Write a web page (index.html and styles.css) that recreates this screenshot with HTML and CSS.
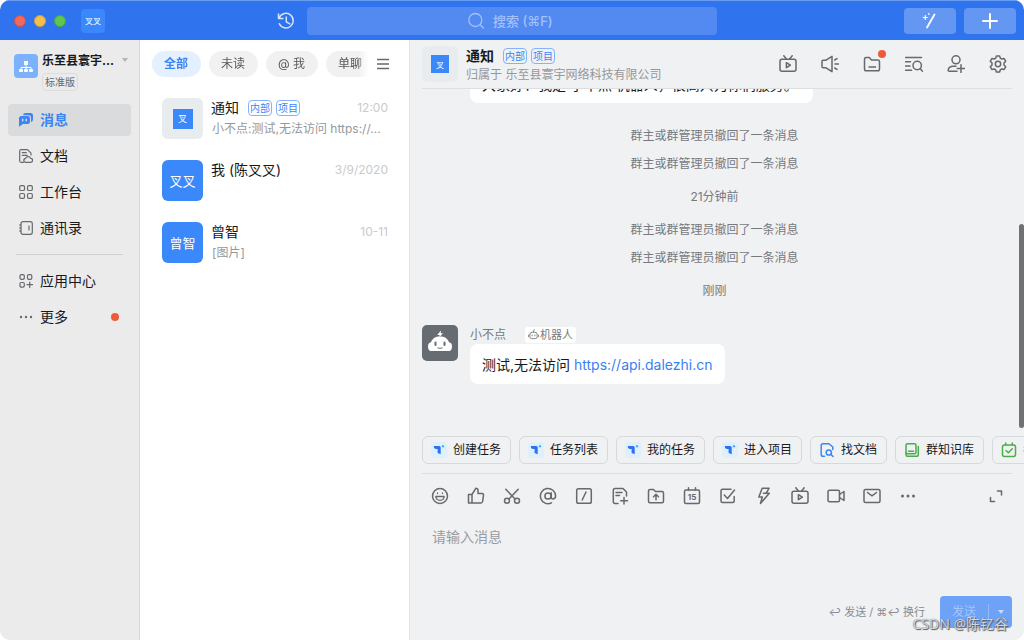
FILE: index.html
```html
<!DOCTYPE html>
<html lang="zh-CN">
<head>
<meta charset="utf-8">
<meta name="viewport" content="width=device-width, initial-scale=1">
<title>通知</title>
<link rel="stylesheet" href="styles.css">
</head>
<body>
<svg class="sprite" aria-hidden="true">
  <symbol id="tv" viewBox="0 0 18 18"><rect x="1" y="4.2" width="16" height="12" rx="2"/><path d="M4.8.8 7.6 4.2M13.2.8l-2.8 3.4M7.4 7.7v5l4-2.5z"/></symbol>
  <symbol id="teambition" viewBox="0 0 16 16"><rect width="16" height="16" rx="3" fill="#dff0fd" stroke="none"/><path d="M2.800 4H8.200Q9.700 4 9.700 5.500V12.200L6.600 11V7H5Q2.800 7 2.800 4z" fill="#2f6ff2" stroke="none"/><circle cx="12" cy="4.300" r="1.200" fill="#4bb4fa" stroke="none"/></symbol>
</svg>

<div class="window">
  <header class="topbar">
    <div class="topbar-left">
      <span class="lights"><i class="light red"></i><i class="light yellow"></i><i class="light lime"></i></span>
      <span class="me">叉叉</span>
      <button class="history" aria-label="历史">
        <svg class="icon" viewBox="0 0 18 18"><path d="M1.500 2v4.500H6M2 6.300A7.300 7.300 0 1 1 2.300 11.800M9.300 5v4.800l3.400 2"/></svg>
      </button>
    </div>
    <label class="search">
      <svg class="icon" viewBox="0 0 18 18"><circle cx="8.300" cy="8" r="6.500"/><path d="m13.300 12.800 3 3.200"/></svg>
      <input type="search" placeholder="搜索 (⌘F)" aria-label="搜索">
    </label>
    <div class="topbar-right">
      <button class="top-button" aria-label="快捷工具"><svg class="icon" viewBox="0 0 18 18"><path d="M13.500 2.500 6 15.500" stroke-width="1.800"/><path d="M4.300 3.500v4M2.300 5.500h4" stroke-width="1.200"/><path d="M7.800 1.500v1" stroke-width="1.200"/></svg></button>
      <button class="top-button" aria-label="新建"><svg class="icon" viewBox="0 0 18 18"><path d="M9 2v14M2 9h14" stroke-width="2"/></svg></button>
    </div>
  </header>

  <div class="body">
    <aside class="sidebar">
      <div class="org">
        <span class="org-logo"><svg viewBox="0 0 24 24"><rect x="10" y="7" width="4" height="4" fill="#fff"/><path d="M12 11v5M7 16v-2.500h10V16" fill="none" stroke="#fff"/><rect x="5" y="15" width="4" height="3" rx="1" fill="#fff"/><rect x="10" y="15" width="4" height="3" rx="1" fill="#fff"/><rect x="15" y="15" width="4" height="3" rx="1" fill="#fff"/></svg></span>
        <div class="org-info">
          <div class="org-name">乐至县寰宇...</div>
          <span class="edition">标准版</span>
        </div>
        <i class="caret"></i>
      </div>
      <nav class="nav">
        <a class="nav-item active" href="#messages"><svg class="icon solid" viewBox="0 0 14 14"><path d="M4 2.200Q4.300 0 6.500 0H11.500Q14 0 14 2.500V6.500Q14 8.500 12 9.300V4.500Q12 2.200 9.500 2.200z"/><path d="M2.500 3H8.500Q11 3 11 5.500V8.500Q11 11 8.500 11H4L.5 13.500Q0 13.800 0 13V5.500Q0 3 2.500 3z"/><path d="M3.700 6.200v1.600M7.200 6.200v1.600" stroke="#dadbdd" stroke-width="1.400"/></svg>消息</a>
        <a class="nav-item" href="#docs"><svg class="icon" viewBox="0 0 14 14"><path d="M4.500 13.300H2.200Q.7 13.300.7 11.800V2.200Q.7.7 2.200.7H8.500L12 4.200V6M3.300 3.700h4M3.300 6.300h5M7 13.300a2 2 0 0 1-.3-4A2.600 2.600 0 0 1 11.600 9.300a2 2 0 0 1 0 4z"/></svg>文档</a>
        <a class="nav-item" href="#work"><svg class="icon" viewBox="0 0 14 14"><rect x=".7" y=".7" width="4.800" height="4.800" rx="1.300"/><rect x="8.500" y=".7" width="4.800" height="4.800" rx="1.300"/><rect x=".7" y="8.500" width="4.800" height="4.800" rx="1.300"/><rect x="8.500" y="8.500" width="4.800" height="4.800" rx="1.300"/></svg>工作台</a>
        <a class="nav-item" href="#contacts"><svg class="icon" viewBox="0 0 14 14"><rect x="2" y=".7" width="11.300" height="12.600" rx="2"/><path d="M10 5v4M.5 4h1.500M.5 7h1.500M.5 10h1.500"/></svg>通讯录</a>
        <hr class="nav-rule">
        <a class="nav-item" href="#apps"><svg class="icon" viewBox="0 0 14 14"><rect x="1" y=".7" width="4.300" height="4.600" rx="1.300"/><rect x="8.500" y=".7" width="4.300" height="4.600" rx="1.300"/><rect x="1" y="8.500" width="4.300" height="4.600" rx="1.300"/><path d="M10.700 8v5.500M8 10.700h5.500"/></svg>应用中心</a>
        <a class="nav-item" href="#more"><svg class="icon solid" viewBox="0 0 14 14"><circle cx="2" cy="7" r="1.200"/><circle cx="7" cy="7" r="1.200"/><circle cx="12" cy="7" r="1.200"/></svg>更多<i class="dot"></i></a>
      </nav>
    </aside>

    <section class="list">
      <div class="filters">
        <div class="tabs">
          <button class="tab selected">全部</button>
          <button class="tab">未读</button>
          <button class="tab">@ 我</button>
          <button class="tab">单聊</button>
        </div>
        <button class="menu" aria-label="筛选"><svg class="icon" viewBox="0 0 12 12"><path d="M0 1.500h12M0 6h12M0 10.500h12"/></svg></button>
      </div>
      <a class="chat-row" href="#c1">
        <span class="avatar pale"><span class="mark">叉</span></span>
        <span class="row-main">
          <span class="row-top"><span class="row-name">通知</span><span class="badge">内部</span><span class="badge">项目</span><time class="time">12:00</time></span>
          <span class="preview">小不点:测试,无法访问 https://...</span>
        </span>
      </a>
      <a class="chat-row" href="#c2">
        <span class="avatar">叉叉</span>
        <span class="row-main">
          <span class="row-top"><span class="row-name">我 (陈叉叉)</span><time class="time">3/9/2020</time></span>
        </span>
      </a>
      <a class="chat-row" href="#c3">
        <span class="avatar">曾智</span>
        <span class="row-main">
          <span class="row-top"><span class="row-name">曾智</span><time class="time">10-11</time></span>
          <span class="preview">[图片]</span>
        </span>
      </a>
    </section>

    <main class="chat">
      <header class="chat-head">
        <span class="avatar pale small"><span class="mark">叉</span></span>
        <div class="chat-title">
          <div class="title-line"><h1>通知</h1><span class="badge">内部</span><span class="badge">项目</span></div>
          <div class="belongs">归属于 乐至县寰宇网络科技有限公司</div>
        </div>
        <div class="head-actions">
          <button aria-label="直播"><svg class="icon"><use href="#tv"/></svg></button>
          <button aria-label="公告"><svg class="icon" viewBox="0 0 18 18"><path d="M1 6.200Q1 5.200 2 5.200H5L11 1.300V16.700L5 12.800H2Q1 12.800 1 11.800zM13.700 5l2.300-1.400M14 9h3.500M13.700 13l2.300 1.400"/></svg></button>
          <button class="flagged" aria-label="文件"><svg class="icon" viewBox="0 0 18 18"><path d="M1.500 4.200Q1.500 2.500 3.200 2.500H6.300L8.500 5H14.800Q16.500 5 16.500 6.700V14Q16.500 15.800 14.700 15.800H3.300Q1.500 15.800 1.500 14zM6 12h6.500"/></svg><i class="dot"></i></button>
          <button aria-label="查找聊天记录"><svg class="icon" viewBox="0 0 18 18"><path d="M.5 2.500h16M.5 6.800h5M.5 11h4.500M.5 15.300h6M15.200 13.700l2.300 2.500"/><circle cx="12.200" cy="10.500" r="4.200"/></svg></button>
          <button aria-label="添加成员"><svg class="icon" viewBox="0 0 18 18"><circle cx="9" cy="4.800" r="4"/><path d="M10 16.300H2.500Q.8 16.300 1.300 14.500 2.300 11.300 6 11.300H9M14 9.800v7.700M10.200 13.600h7.600"/></svg></button>
          <button aria-label="设置"><svg class="icon" viewBox="0 0 18 18"><path d="M7.400.9h3.200l.7 2.300 1.400.8 2.300-.6 1.700 2.800-1.700 1.900v1.800l1.700 1.900-1.700 2.800-2.300-.6-1.400.8-.7 2.300H7.400l-.7-2.300-1.400-.8-2.300.6-1.700-2.800L3 9.900V8.100L1.300 6.200 3 3.400l2.300.6 1.400-.8z"/><circle cx="9" cy="9" r="2.700"/></svg></button>
        </div>
      </header>

      <div class="messages">
        <div class="bubble greeting">大家好！我是 小不点 机器人，很高兴为你们服务。</div>
        <div class="log">
          <p>群主或群管理员撤回了一条消息</p>
          <p>群主或群管理员撤回了一条消息</p>
          <p class="stamp">21分钟前</p>
          <p>群主或群管理员撤回了一条消息</p>
          <p>群主或群管理员撤回了一条消息</p>
          <p class="stamp">刚刚</p>
        </div>
        <article class="message">
          <span class="bot"><svg viewBox="0 0 36 36"><path d="M19 5.500 15.200 10H17.500V12L21 8.300H18.700z" fill="#fff"/><path d="M8.500 26Q6 25.500 6 21.300 6 18 9 17.300 C10.500 13.200 13.500 11.500 18 11.500 S25.500 13.200 27 17.300Q30 18 30 21.300 30 25.500 27.500 26z" fill="#fff"/><path d="M13.500 17.500v2.500M22.500 17.500v2.500" stroke="#666c72" stroke-width="2" stroke-linecap="round"/><path d="M15.500 22.800q2.500 1.200 5 0" fill="none" stroke="#666c72"/></svg></span>
          <div>
            <div class="sender">小不点<span class="robot-tag"><svg class="icon" viewBox="0 0 12 12"><path d="M2 6Q2 3.500 4.500 3.500H7.500Q10 3.500 10 6V8.500Q10 10.500 8 10.500H4Q2 10.500 2 8.500zM.7 6.500v2M11.300 6.500v2M4.500 6.500v1M7.500 6.500v1M6.800.8 5.800 3.200"/></svg>机器人</span></div>
            <div class="bubble last">测试,无法访问 <a href="https://api.dalezhi.cn">https://api.dalezhi.cn</a></div>
          </div>
        </article>
        <i class="thumb"></i>
      </div>

      <div class="chips">
        <button class="chip"><svg class="icon"><use href="#teambition"/></svg>创建任务</button>
        <button class="chip"><svg class="icon"><use href="#teambition"/></svg>任务列表</button>
        <button class="chip"><svg class="icon"><use href="#teambition"/></svg>我的任务</button>
        <button class="chip"><svg class="icon"><use href="#teambition"/></svg>进入项目</button>
        <button class="chip find"><svg class="icon" viewBox="0 0 16 16"><path d="M5.500 14.300H4Q2.200 14.300 2.200 12.500V3.500Q2.200 1.700 4 1.700H10L13.800 5V7.500M12 12.500l2 2"/><circle cx="9.800" cy="10.500" r="2.600"/></svg>找文档</button>
        <button class="chip group"><svg class="icon" viewBox="0 0 16 16"><rect x="2" y="1.800" width="10" height="10" rx="1.500"/><path d="M2 10.500v2Q2 14.300 4 14.300H12.500Q14.300 14.300 14.300 12.500V4.500M4.500 9.300h5"/></svg>群知识库</button>
        <button class="chip group"><svg class="icon" viewBox="0 0 16 16"><rect x="1.500" y="3" width="13" height="11.500" rx="2"/><path d="M4.700 1v2M11.300 1v2M5 8.500l2.300 2.200 4-4"/></svg>考勤打卡</button>
      </div>

      <form class="composer">
        <div class="tools">
          <button type="button" aria-label="表情"><svg class="icon" viewBox="0 0 18 18"><circle cx="9" cy="9" r="7.500"/><path d="M6.500 6v.5M11.500 6v.5M4.800 9.500h8.400Q12.800 13.300 9 13.300T4.800 9.500z" stroke-width="1.300"/></svg></button>
          <button type="button" aria-label="赞"><svg class="icon" viewBox="0 0 18 18"><path d="M5 7.500H1.500V16H5zM5 7.500 8.800 1.300Q11 1.300 11 3.300V6.500H15Q16.700 6.500 16.500 8.200L15.600 14.500Q15.400 16 14 16H5"/></svg></button>
          <button type="button" aria-label="截图"><svg class="icon" viewBox="0 0 18 18"><path d="M2.800 2.300 12 12M15.200 2.300 6 12"/><circle cx="4" cy="13.800" r="2.500"/><circle cx="14" cy="13.800" r="2.500"/></svg></button>
          <button type="button" aria-label="提及"><svg class="icon" viewBox="0 0 18 18"><circle cx="9" cy="9" r="3.100"/><path d="M12.200 5.800V10.300Q12.500 12 14.200 12 16.600 11.500 16.600 9A7.600 7.600 0 1 0 12.500 15.800"/></svg></button>
          <button type="button" aria-label="快捷指令"><svg class="icon" viewBox="0 0 18 18"><rect x="1.700" y="1.700" width="14.600" height="14.600" rx="1.800"/><path d="M11 5 7.200 13"/></svg></button>
          <button type="button" aria-label="新建文档"><svg class="icon" viewBox="0 0 18 18"><path d="M7 16.500H4Q2.300 16.500 2.300 14.800V3.200Q2.300 1.500 4 1.500H12L15.500 5V9M5 5.500h6M5 8.500h3.500M13 10.500v6.500M9.700 13.800h6.800"/></svg></button>
          <button type="button" aria-label="文件"><svg class="icon" viewBox="0 0 18 18"><path d="M1.500 4Q1.500 2.500 3 2.500H6.500L8.500 4.500H15Q16.500 4.500 16.500 6V14.300Q16.500 15.800 15 15.800H3Q1.500 15.800 1.500 14.300zM9 12.800V7.500M6.500 9.700 9 7.300l2.500 2.400"/></svg></button>
          <button type="button" aria-label="日程"><svg class="icon" viewBox="0 0 18 18"><rect x="1.500" y="3" width="15" height="13.500" rx="1.500"/><path d="M5.500.8V3M12.500.8V3"/><text x="9" y="12.800" class="day">15</text></svg></button>
          <button type="button" aria-label="待办"><svg class="icon" viewBox="0 0 18 18"><path d="M12 2.300H3.500Q2 2.300 2 3.800V14Q2 15.500 3.500 15.500H13.700Q15.200 15.500 15.200 14V9.500M5.300 8l3.200 3.500L15.500 3"/></svg></button>
          <button type="button" aria-label="闪电"><svg class="icon" viewBox="0 0 18 18"><path d="M7.200 1.300H14L11 6.300H14.300L5.500 16.500 7.300 10H3.800zM11 6.300H8.500"/></svg></button>
          <button type="button" aria-label="直播"><svg class="icon"><use href="#tv"/></svg></button>
          <button type="button" aria-label="视频会议"><svg class="icon" viewBox="0 0 18 18"><rect x="1" y="3.200" width="11.500" height="11.500" rx="1.500"/><path d="M12.500 7.500 17 4.500V13.500L12.500 10.500"/></svg></button>
          <button type="button" aria-label="邮件"><svg class="icon" viewBox="0 0 18 18"><rect x="1" y="2.500" width="16" height="13" rx="1.500"/><path d="M4.500 5.500 9 8.800l4.500-3.300"/></svg></button>
          <button type="button" aria-label="更多"><svg class="icon solid" viewBox="0 0 18 18"><circle cx="3.500" cy="9" r="1.500"/><circle cx="9" cy="9" r="1.500"/><circle cx="14.500" cy="9" r="1.500"/></svg></button>
          <button type="button" class="expand" aria-label="展开"><svg class="icon" viewBox="0 0 18 18"><path d="M10.500 4H14.500V8M3.500 10.500V14.500H7.500"/></svg></button>
        </div>
        <textarea class="entry" placeholder="请输入消息" aria-label="请输入消息"></textarea>
        <div class="send-row">
          <span class="hint">↩ 发送 / ⌘↩ 换行</span>
          <span class="send"><button type="button" class="send-main">发送</button><button type="button" class="send-more" aria-label="发送选项"><i class="caret"></i></button></span>
        </div>
      </form>
      <span class="watermark">CSDN @陈钇谷</span>
    </main>
  </div>
</div>
</body>
</html>
```
FILE: styles.css
```css
* { box-sizing: border-box; }
body {
  margin: 0;
  background: #fff;
  color: #17191c;
  font-family: Inter, "Noto Sans CJK SC", "DejaVu Sans", sans-serif;
  font-size: 14px;
  line-height: 20px;
}
button, input, textarea { font: inherit; color: inherit; border: 0; padding: 0; background: none; }
a { color: inherit; text-decoration: none; }
h1, p { margin: 0; font-size: 14px; }
.sprite { position: absolute; width: 0; height: 0; }
.icon {
  display: block;
  flex: none;
  width: 18px;
  height: 18px;
  fill: none;
  stroke: currentColor;
  stroke-width: 1.5;
  stroke-linecap: round;
  stroke-linejoin: round;
}
.icon.solid { fill: currentColor; stroke: none; }
.dot { width: 8px; height: 8px; border-radius: 50%; background: #ef5b3a; }

.window {
  display: flex;
  flex-direction: column;
  height: 100vh;
  border-radius: 10px;
  overflow: hidden;
}
.topbar {
  display: grid;
  grid-template-columns: 1fr minmax(0, 410px) 1fr;
  align-items: center;
  flex: none;
  height: 40px;
  border-top: 1px solid #6a9df2;
  background: #2f74ee;
  color: #fff;
}
.topbar-left { display: flex; align-items: center; padding: 0 12px 0 14px; }
.lights { display: flex; gap: 8px; }
.light { width: 12px; height: 12px; border-radius: 50%; border: 1px solid; }
.red { background: #ee6a5e; border-color: #d1503f; }
.yellow { background: #f5bf4f; border-color: #d6a039; }
.lime { background: #61c554; border-color: #4ea63b; }
.me {
  display: grid;
  place-items: center;
  width: 24px;
  height: 24px;
  margin-left: 15px;
  border-radius: 4px;
  background: #3a88fa;
  font-size: 8px;
}
.history { margin-left: auto; color: #d5e3fc; }
.search {
  display: flex;
  align-items: center;
  justify-content: center;
  gap: 8px;
  height: 28px;
  border-radius: 4px;
  background: #538af1;
  color: #a3c1f8;
}
.search .icon { stroke-width: 1.3; }
.search input { width: 64px; outline: 0; appearance: none; }
.search input::placeholder { color: #a3c1f8; opacity: 1; font-size: 13px; font-weight: 500; }
.search input::-webkit-search-cancel-button { display: none; }
.topbar-right { display: flex; justify-content: flex-end; gap: 8px; padding-right: 8px; }
.top-button { display: grid; place-items: center; width: 52px; height: 26px; border-radius: 4px; background: #6497f2; }

.body { display: flex; flex: 1; min-height: 0; }
.sidebar { flex: none; width: 140px; border-right: 1px solid #d6d7d9; background: #ebebeb; }
.org { display: flex; gap: 4px; height: 64px; padding: 12px 11px 0 14px; }
.org-logo { flex: none; width: 24px; height: 24px; margin-top: 2px; border-radius: 4px; background: #7bb2fb; }
.org-info { flex: 1; white-space: nowrap; }
.org-name { width: 76px; font-size: 12px; line-height: 18px; font-weight: 700; }
.edition {
  display: inline-block;
  margin-top: 3px;
  padding: 0 2px;
  border: 1px solid #dcdcdc;
  border-radius: 4px;
  color: #66696d;
  font-size: 10px;
  line-height: 16px;
}
.caret { flex: none; border: 3px solid transparent; border-top: 4px solid #b4b4b4; border-bottom: 0; }
.org .caret { margin-top: 6px; }
.nav { display: flex; flex-direction: column; gap: 4px; padding: 0 8px; }
.nav-item { display: flex; align-items: center; gap: 7px; height: 32px; padding: 0 12px 0 11px; border-radius: 4px; }
.nav-item .icon { width: 14px; height: 14px; color: #66696d; stroke-width: 1.2; }
.nav-item.active { background: #dadbdd; color: #3a86f8; font-weight: 700; }
.nav-item.active .icon { color: #3a86f8; }
.nav-item .dot { margin-left: auto; }
.nav-rule { width: calc(100% - 16px); margin: 6px 8px; border: 0; border-top: 1px solid #cfd0d1; }

.list { flex: none; width: 270px; border-right: 1px solid #e3e4e6; background: #fff; }
.filters { display: flex; align-items: center; justify-content: space-between; height: 48px; padding: 0 20px 0 12px; }
.tabs { display: flex; gap: 8px; width: 217px; overflow: hidden; mask-image: linear-gradient(to right, #000 95%, transparent); }
.tab { flex: none; height: 26px; padding: 0 13px 0 12px; border-radius: 13px; background: #f1f1f1; color: #55585c; font-size: 12px; }
.tab.selected { background: #e5f0ff; color: #3a86f8; font-weight: 700; }
.menu .icon { width: 12px; height: 12px; color: #66696d; }
.chat-row { display: flex; gap: 8px; height: 62px; padding: 10px 21px 0 22px; }
.avatar {
  display: grid;
  place-items: center;
  flex: none;
  width: 41px;
  height: 41px;
  border-radius: 6px;
  background: #3a88fa;
  color: #fff;
  font-size: 13px;
}
.avatar.pale { background: #e8ecee; }
.mark { display: grid; place-items: center; width: 20px; height: 20px; background: #3a88fa; font-size: 9px; }
.avatar.small { width: 36px; height: 36px; }
.small .mark { width: 18px; height: 18px; font-size: 8px; }
.row-main { flex: 1; min-width: 0; }
.row-top { display: flex; align-items: center; gap: 4px; }
.row-name { margin-right: 5px; }
.badge { padding: 0 1px; border: 1px solid #84b3fb; border-radius: 4px; color: #3a86f8; font-size: 10px; line-height: 14px; }
.time { margin-left: auto; color: #c9cbcd; font-size: 12px; }
.preview { display: block; padding-left: 1px; color: #95989b; font-size: 12px; line-height: 22px; white-space: nowrap; }

.chat { position: relative; display: flex; flex-direction: column; flex: 1; min-width: 0; background: #f0f1f3; }
.chat-head { display: flex; align-items: center; gap: 8px; flex: none; height: 49px; margin: 0 12px; border-bottom: 1px solid #dcdee0; }
.chat-title { padding-top: 2px; white-space: nowrap; }
.title-line { display: flex; align-items: center; gap: 4px; }
.title-line h1 { margin-right: 5px; font-weight: 700; }
.belongs { color: #95989b; font-size: 12px; line-height: 18px; }
.head-actions { display: flex; gap: 24px; margin-left: auto; padding-right: 5px; color: #66696d; }
.head-actions button { position: relative; }
.flagged .dot { position: absolute; top: -5px; right: -5px; }

.messages {
  position: relative;
  display: flex;
  flex-direction: column;
  justify-content: flex-end;
  flex: 1;
  min-height: 0;
  padding: 0 5px 44px 12px;
  overflow: hidden;
}
.bubble { width: fit-content; padding: 11px 12px 9px; border-radius: 8px; background: #fff; }
.greeting { align-self: flex-start; margin-left: 48px; padding: 12px 15px 8px 12px; }
.bubble a { color: #3a7ff0; }
.log { margin: 23px 0 11px -12px; color: #77797c; font-size: 12px; text-align: center; }
.log p { margin-bottom: 8px; font-size: 12px; }
.log .stamp { margin: 13px 0; }
.message { display: flex; gap: 12px; }
.bot { flex: none; width: 36px; height: 36px; border-radius: 5px; background: #666c72; }
.bot svg, .org-logo svg { display: block; }
.sender { display: flex; align-items: center; gap: 19px; height: 19px; color: #77797c; font-size: 12px; }
.robot-tag { display: flex; align-items: center; gap: 1px; padding: 0 3px; border-radius: 3px; background: #fff; font-size: 11px; line-height: 16px; }
.robot-tag .icon { width: 11px; height: 11px; stroke-width: 1; }
.thumb { position: absolute; right: 0; bottom: 0; width: 5px; height: 204px; border-radius: 3px; background: #6f7174; }

.chips { display: flex; gap: 8px; flex: none; margin: 8px 0 9px; padding-left: 12px; overflow: hidden; }
.chip {
  display: flex;
  align-items: center;
  gap: 6px;
  flex: none;
  height: 28px;
  padding: 0 9px 0 8px;
  border: 1px solid #d6d8da;
  border-radius: 6px;
  font-size: 12px;
}
.chip .icon { width: 16px; height: 16px; }
.chip.find .icon { color: #3a86f8; }
.chip.group .icon { color: #4bad4b; }

.composer { display: flex; flex-direction: column; flex: none; height: 167px; margin: 0 12px; border-top: 1px solid #dcdee0; }
.tools { display: flex; gap: 18px; padding: 13px 7px 0 9px; color: #66696d; }
.expand { margin-left: auto; }
.day { fill: currentColor; stroke: none; font-size: 8px; font-weight: 700; text-anchor: middle; }
.entry { flex: 1; width: 100%; margin-top: 22px; padding: 0 10px; outline: 0; resize: none; }
.entry::placeholder { color: #999ca0; opacity: 1; }
.send-row { display: flex; align-items: center; justify-content: flex-end; gap: 15px; padding-bottom: 12px; }
.hint { color: #898c90; font-size: 11px; }
.send { display: flex; align-items: center; height: 32px; border-radius: 4px; background: #6da2f7; color: #a3c6fb; font-size: 12px; }
.send-main { width: 48px; }
.send-more { display: grid; place-items: center; width: 24px; height: 16px; border-left: 1px solid #91baf9; }
.send .caret { border-top-color: #c5dafc; }
.watermark {
  position: absolute;
  right: 16px;
  bottom: 6px;
  color: #d3d6da;
  font-family: "Noto Sans", "Noto Sans CJK SC", sans-serif;
  font-size: 14px;
  text-shadow: 1px 1px 1px #55585c, 0 0 1px #66696d;
  pointer-events: none;
}
```
